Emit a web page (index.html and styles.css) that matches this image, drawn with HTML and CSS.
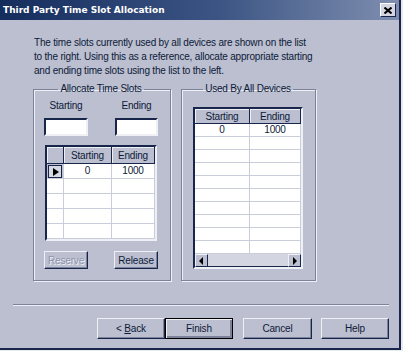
FILE: index.html
```html
<!DOCTYPE html>
<html lang="en">
<head>
    <meta charset="UTF-8">
    <title>Third Party Time Slot Allocation</title>
    <link rel="stylesheet" href="styles.css">
</head>
<body>
<div class="window">
    <div class="titlebar">
        <span class="title">Third Party Time Slot Allocation</span>
        <span class="close">
            <svg width="8" height="7" viewBox="0 0 8 7"><path d="M0.5 0.5L7.5 6.5M7.5 0.5L0.5 6.5" stroke="#000" stroke-width="2"/></svg>
        </span>
    </div>

    <div class="content">
        <p class="intro">
            The time slots currently used by all devices are shown on the list<br>
            to the right. Using this as a reference, allocate appropriate starting<br>
            and ending time slots using the list to the left.
        </p>

        <div class="groups">
            <!-- left group -->
            <fieldset class="group group-left">
                <legend>Allocate Time Slots</legend>
                <div class="entry">
                    <div class="entry-col">
                        <label>Starting</label>
                        <input type="text" class="field">
                    </div>
                    <div class="entry-col">
                        <label>Ending</label>
                        <input type="text" class="field">
                    </div>
                </div>

                <div class="grid grid-alloc">
                    <div class="grid-head">
                        <span class="sel"></span>
                        <span>Starting</span>
                        <span>Ending</span>
                    </div>
                    <div class="grid-body">
                        <div class="row"><span class="sel current"><i></i></span><span>0</span><span>1000</span></div>
                        <div class="row"><span class="sel"></span><span></span><span></span></div>
                        <div class="row"><span class="sel"></span><span></span><span></span></div>
                        <div class="row"><span class="sel"></span><span></span><span></span></div>
                        <div class="row"><span class="sel"></span><span></span><span></span></div>
                        <div class="row"><span class="sel"></span><span></span><span></span></div>
                    </div>
                </div>

                <div class="entry entry-buttons">
                    <button class="btn btn-small" disabled>Reserve</button>
                    <button class="btn btn-small">Release</button>
                </div>
            </fieldset>

            <!-- right group -->
            <fieldset class="group group-right">
                <legend>Used By All Devices</legend>
                <div class="grid grid-used">
                    <div class="grid-head">
                        <span>Starting</span>
                        <span>Ending</span>
                    </div>
                    <div class="grid-body">
                        <div class="row"><span>0</span><span>1000</span></div>
                        <div class="row"><span></span><span></span></div>
                        <div class="row"><span></span><span></span></div>
                        <div class="row"><span></span><span></span></div>
                        <div class="row"><span></span><span></span></div>
                        <div class="row"><span></span><span></span></div>
                        <div class="row"><span></span><span></span></div>
                        <div class="row"><span></span><span></span></div>
                        <div class="row"><span></span><span></span></div>
                        <div class="row"><span></span><span></span></div>
                        <div class="row"><span></span><span></span></div>
                    </div>
                    <div class="hscroll">
                        <span class="arrow arrow-left"></span>
                        <span class="track"></span>
                        <span class="arrow arrow-right"></span>
                    </div>
                </div>
            </fieldset>
        </div>

        <div class="separator"></div>

        <div class="actions">
            <div class="pair">
                <button class="btn">&lt; <u>B</u>ack</button>
                <button class="btn btn-default">Finish</button>
            </div>
            <button class="btn btn-cancel">Cancel</button>
            <button class="btn">Help</button>
        </div>
    </div>
</div>
</body>
</html>
```

FILE: styles.css
```css
:root {
    --face: #bbbfd0;
    --light: #eef0f6;
    --shadow: #7c8299;
    --dark: #17264a;
    --text: #0d1a38;
    --grid-line: #c9cdd9;
}
* {
    box-sizing: border-box;
}
body {
    margin: 0;
    background: #e8eaf0;
    font-family: "Liberation Sans", Arial, sans-serif;
    font-size: 10px;
    letter-spacing: -0.2px;
    color: var(--text);
}
.window {
    width: 401px;
    height: 350px;
    background: var(--face);
    border-right: 2px solid var(--dark);
    border-bottom: 2px solid var(--dark);
    display: flex;
    flex-direction: column;
}
.titlebar {
    height: 20px;
    background: linear-gradient(to right, #142d5c, #3c5584 55%, #7f8eb0);
    display: flex;
    align-items: center;
    justify-content: space-between;
    padding: 0 3px 0 3px;
}
.title {
    color: #fff;
    font-family: "DejaVu Sans", sans-serif;
    font-weight: bold;
    font-size: 9px;
    letter-spacing: 0;
}
.close {
    width: 16px;
    height: 14px;
    background: #d4d7e1;
    border: 1px solid;
    border-color: #fff var(--dark) var(--dark) #fff;
    display: flex;
    align-items: center;
    justify-content: center;
}
.content {
    flex: 1;
    padding: 0 10px 0 13px;
    display: flex;
    flex-direction: column;
}
.intro {
    margin: 16px 0 0 21px;
    line-height: 14px;
}
.groups {
    display: flex;
    gap: 10px;
    margin: 4px 0 0 20px;
}
.group {
    margin: 0;
    height: 199px;
    border: 1px solid var(--shadow);
    box-shadow: 1px 1px 0 var(--light), inset 1px 1px 0 var(--light);
    min-width: 0;
}
.group legend {
    margin: 0 auto;
    padding: 0 2px;
    line-height: 14px;
}
.group-left {
    width: 138px;
    padding: 3px 12px 0 10px;
}
.group-right {
    width: 135px;
    padding: 11px 12px 0 11px;
}
.entry {
    display: flex;
    justify-content: space-between;
}
.entry-col {
    width: 44px;
    display: flex;
    flex-direction: column;
    align-items: center;
}
.entry-col:last-child {
    width: 43px;
}
.entry-col label {
    line-height: 14px;
    white-space: nowrap;
}
.field {
    margin-top: 5px;
    width: 100%;
    height: 18px;
    background: #fff;
    border: 2px solid;
    border-color: var(--dark) var(--light) var(--light) var(--dark);
    outline: none;
}
.grid {
    background: #fff;
    border: 2px solid;
    border-color: var(--dark) var(--light) var(--light) var(--dark);
    overflow: hidden;
}
.grid-head,
.row {
    display: grid;
}
.grid-head span {
    background: var(--face);
    border-right: 1px solid var(--dark);
    border-bottom: 1px solid var(--dark);
    box-shadow: inset 1px 1px 0 var(--light);
    text-align: center;
}
.row span {
    border-right: 1px solid var(--grid-line);
    border-bottom: 1px solid var(--grid-line);
    text-align: center;
}
.grid-alloc {
    margin: 9px 1px 0 1px;
    height: 96px;
}
.grid-alloc .grid-head,
.grid-alloc .row {
    grid-template-columns: 17px 48px 1fr;
}
.grid-alloc .grid-head span {
    height: 17px;
    line-height: 17px;
}
.grid-alloc .row span {
    height: 15px;
    line-height: 14px;
}
.grid-alloc .row .current {
    background: var(--face);
    padding: 1px;
}
.current i {
    display: block;
    height: 13px;
    border: 1px solid var(--dark);
    background: #d6d9e3;
    position: relative;
}
.current i::after {
    content: "";
    position: absolute;
    left: 4px;
    top: 2px;
    border-left: 6px solid #000;
    border-top: 4px solid transparent;
    border-bottom: 4px solid transparent;
}
.entry-buttons {
    margin-top: 10px;
}
.grid-used {
    height: 162px;
    display: flex;
    flex-direction: column;
}
.grid-used .grid-head,
.grid-used .row {
    grid-template-columns: 55px 1fr;
}
.grid-used .grid-head span {
    height: 15px;
    line-height: 15px;
}
.grid-used .grid-body {
    flex: 1;
    overflow: hidden;
}
.grid-used .row span {
    height: 13px;
    line-height: 12px;
}
.hscroll {
    height: 13px;
    display: flex;
    background: #d3d6e0;
}
.arrow {
    width: 13px;
    background: var(--face);
    border: 1px solid;
    border-color: var(--light) var(--dark) var(--dark) var(--light);
    position: relative;
}
.arrow::after {
    content: "";
    position: absolute;
    top: 2px;
    left: 3px;
    border-top: 4px solid transparent;
    border-bottom: 4px solid transparent;
}
.arrow-left::after {
    border-right: 4px solid #000;
}
.arrow-right::after {
    left: 4px;
    border-left: 4px solid #000;
}
.track {
    flex: 1;
    border-bottom: 1px solid var(--dark);
}
.btn {
    font-family: "Liberation Sans", Arial, sans-serif;
    font-size: 10px;
    letter-spacing: -0.15px;
    color: var(--text);
    background: var(--face);
    border: 1px solid;
    border-color: var(--light) var(--dark) var(--dark) var(--light);
    box-shadow: inset -1px -1px 0 var(--shadow);
    padding: 0;
    width: 68px;
    height: 21px;
}
.btn-small {
    width: 44px;
    height: 18px;
}
.btn:disabled {
    color: #8f95aa;
    text-shadow: 1px 1px 0 var(--light);
}
.btn-default {
    border: 1px solid #000;
    box-shadow: inset 1px 1px 0 var(--light), inset -2px -2px 0 var(--shadow);
}
.btn-cancel {
    width: 69px;
    margin-left: 1px;
}
.separator {
    margin-top: 23px;
    height: 2px;
    border-top: 1px solid var(--shadow);
    border-bottom: 1px solid var(--light);
}
.actions {
    margin-top: 12px;
    display: flex;
    justify-content: flex-end;
    gap: 9px;
}
.pair {
    display: flex;
}
u {
    text-decoration: underline;
}
```
